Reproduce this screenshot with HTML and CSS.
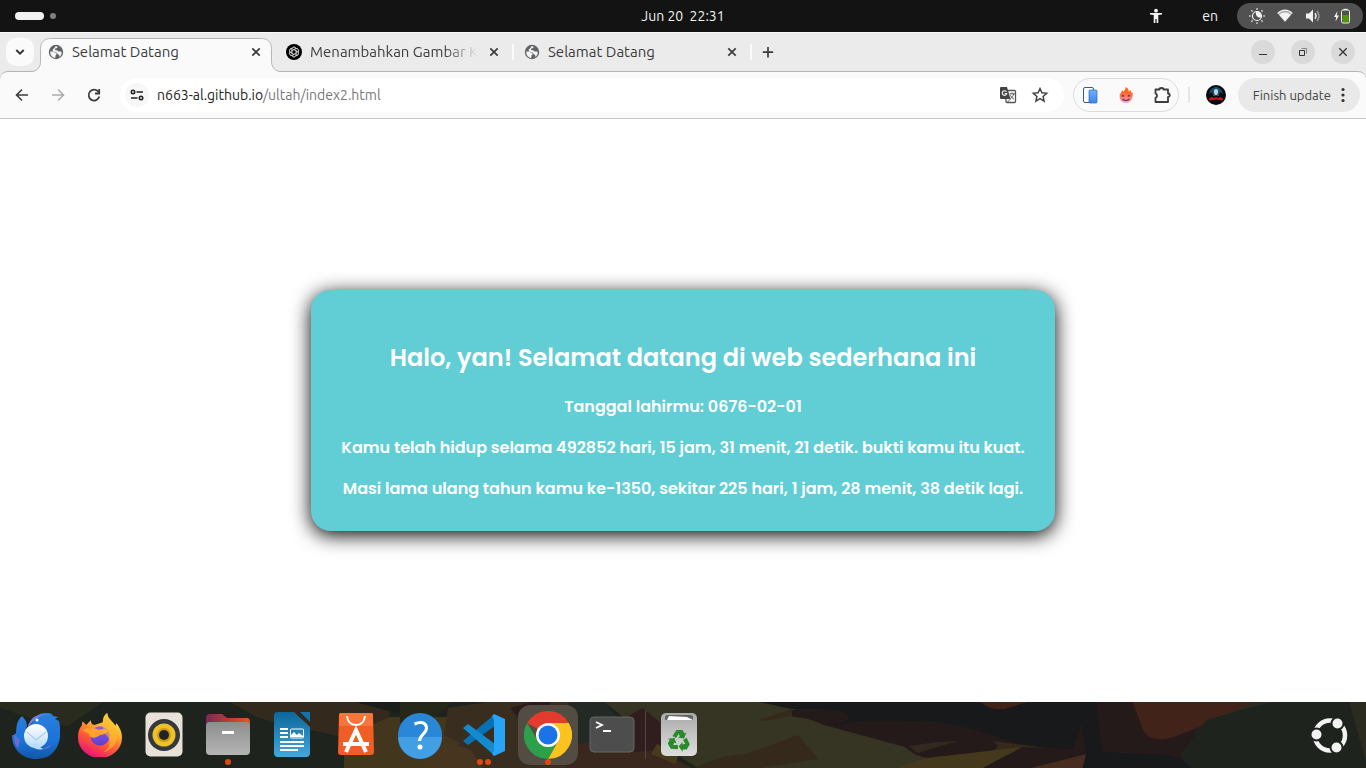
FILE: index.html
```html
<!DOCTYPE html>
<html lang="id">
<head>
<meta charset="utf-8">
<meta name="viewport" content="width=device-width, initial-scale=1">
<title>Selamat Datang</title>
<link rel="stylesheet" href="styles.css">
</head>
<body>
<svg width="0" height="0" class="defs" aria-hidden="true">
  <defs>
    <symbol id="globe" viewBox="0 0 16 16"><circle cx="8" cy="8" r="7.200" fill="#5f6368"/><path d="M2.300 7.400h2.500c1 0 1.300.8 2 1.200.9.400 1.800.2 1.800 1.300 0 .9-1.200 1-1.200 2v2C4.200 13.500 2 10.800 2.300 7.400zM9.500 2.400c.2 1.200-.5 1.700-1.500 1.900-.9.300-1.400.9-.8 1.600.7.600 2-.1 2.600.8.400.9 1.500.9 2.900.9l1 .3c.1 2-.8 4-2.300 5 .1-1.200-.2-2.200-1.200-2.400-1.100-.2-.9-1.300-1.700-1.900-.9-.6-2.500-.4-3.300-1.300C4.300 6.300 4.500 5 6 4.400c1-.4.600-1.600 1.400-2.100z" fill="#f4f4f4"/></symbol>
    <symbol id="close" viewBox="0 0 16 16"><path d="M4.300 4.300l7.400 7.400M11.700 4.300l-7.400 7.400" stroke="#3c3c3c" stroke-width="1.700"/></symbol>
    <linearGradient id="bird" x1="0" y1="0" x2="0" y2="1"><stop offset="0" stop-color="#2a80dc"/><stop offset=".6" stop-color="#1a73d9"/><stop offset="1" stop-color="#1257a8"/></linearGradient>
    <linearGradient id="mail" x1="0" y1="0" x2="0" y2="1"><stop offset="0" stop-color="#fff"/><stop offset="1" stop-color="#b5dcfb"/></linearGradient>
    <linearGradient id="fox" x1=".8" y1="0" x2=".3" y2="1"><stop offset="0" stop-color="#fff44f"/><stop offset=".35" stop-color="#ffb02e"/><stop offset=".65" stop-color="#ff5a36"/><stop offset="1" stop-color="#e8107c"/></linearGradient>
    <linearGradient id="purple" x1="0" y1="0" x2="0" y2="1"><stop offset="0" stop-color="#9059ff"/><stop offset="1" stop-color="#5b3fc4"/></linearGradient>
    <linearGradient id="gray" x1="0" y1="0" x2="0" y2="1"><stop offset="0" stop-color="#8d8d8d"/><stop offset="1" stop-color="#b5b5b5"/></linearGradient>
    <linearGradient id="folder" x1="0" y1="0" x2="1" y2="0"><stop offset="0" stop-color="#7d2853"/><stop offset="1" stop-color="#e95420"/></linearGradient>
    <linearGradient id="writer" x1="0" y1="0" x2="0" y2="1"><stop offset="0" stop-color="#0b679c"/><stop offset="1" stop-color="#45a7dc"/></linearGradient>
    <linearGradient id="bin" x1="0" y1="0" x2="0" y2="1"><stop offset="0" stop-color="#aaa"/><stop offset="1" stop-color="#dedede"/></linearGradient>
    <linearGradient id="flame" x1="0" y1="0" x2="0" y2="1"><stop offset="0" stop-color="#ff6500"/><stop offset=".45" stop-color="#fb6b3c"/><stop offset="1" stop-color="#f5a8df"/></linearGradient>
    <linearGradient id="phone" x1="0" y1="0" x2="0" y2="1"><stop offset="0" stop-color="#6db1ff"/><stop offset="1" stop-color="#3d85ee"/></linearGradient>
  </defs>
</svg>

<header class="topbar">
  <button class="workspaces" aria-label="Workspaces"><span class="pill"></span><span class="dot"></span></button>
  <time class="clock">Jun 20&nbsp; 22:31</time>
  <div class="status">
    <button class="plain" aria-label="Accessibility"><svg width="16" height="16" viewBox="0 0 16 16" fill="#f2f2f2"><circle cx="8" cy="2.700" r="1.900"/><path d="M2 5h12v1.500L10.300 7v8H8.600v-4H7.400v4H5.700V7L2 6.500z"/></svg></button>
    <button class="plain lang">en</button>
    <button class="tray" aria-label="System">
      <svg width="16" height="16" viewBox="0 0 16 16"><circle cx="8" cy="8" r="4.500" fill="none" stroke="#f2f2f2" stroke-width="1.200"/><path d="M7 3.700C6 7.500 9 10.500 12.300 9.200A4.600 4.600 0 0 0 7 3.700z" fill="#f2f2f2"/><path d="M8 0v1.800M8 14.200V16M0 8h1.800M14.200 8H16M2.300 2.300l1.300 1.300M12.400 12.400l1.300 1.300M2.300 13.700l1.300-1.300M12.400 3.600l1.300-1.300" stroke="#c8c8c8" stroke-width="1.500"/></svg>
      <svg width="16" height="16" viewBox="0 0 16 16"><path d="M.7 5.500C5 1 11 1 15.300 5.500L8 14z" fill="#aaa"/><path d="M2.200 6.700C6 3.700 10 3.700 13.800 6.700L8 13.500z" fill="#f2f2f2"/><path d="M.7 5.500C5 1 11 1 15.300 5.500" fill="none" stroke="#f2f2f2" stroke-width="1.300"/></svg>
      <svg width="16" height="16" viewBox="0 0 16 16"><path d="M1 5.500h3L8 1.500v13L4 10.500H1z" fill="#f2f2f2"/><path d="M10 5.300q2 2.700 0 5.400" fill="none" stroke="#eee" stroke-width="1.500"/><path d="M12 3q4 5 0 10" fill="none" stroke="#999" stroke-width="1.500"/></svg>
      <svg width="18" height="16" viewBox="0 0 18 16"><path d="M4.500 3L1 9h2.200L2.500 13.500 6 7.500H3.800z" fill="#f2f2f2"/><rect x="8.500" y="2" width="8" height="13" rx="1.500" fill="none" stroke="#f2f2f2"/><path d="M10.500.8h4V2h-4z" fill="#f2f2f2"/><path d="M9.500 7h6v7h-6z" fill="#4e9a06"/></svg>
    </button>
  </div>
</header>

<div class="browser">
  <nav class="tabstrip" aria-label="Tabs">
    <button class="tabsearch" aria-label="Search tabs"><svg width="16" height="16" viewBox="0 0 16 16"><path d="M4.300 6l3.700 3.700L11.700 6" fill="none" stroke="#333" stroke-width="1.900"/></svg></button>
    <div class="tab active">
      <svg class="tabshape" width="250" height="34" viewBox="0 0 250 34"><path d="M0 33.500c6 0 9.500-4 9.500-10V10.500c0-6 4-10 10-10h211c6 0 10 4 10 10v13c0 6 4 10 9.500 10V34H0z" fill="#fafafa"/><path d="M0 33.500c6 0 9.500-4 9.500-10V10.500c0-6 4-10 10-10h211c6 0 10 4 10 10v13c0 6 4 10 9.500 10" fill="none" stroke="#b4b4b4"/></svg>
      <svg class="fav" width="16" height="16"><use href="#globe"/></svg>
      <a href="#" class="title">Selamat Datang</a>
      <button class="plain" aria-label="Close tab"><svg width="16" height="16"><use href="#close"/></svg></button>
    </div>
    <div class="tab">
      <svg class="fav" width="16" height="16" viewBox="0 0 16 16"><circle cx="8" cy="8" r="8"/><g fill="none" stroke="#ddd" stroke-width=".7"><path id="p" d="M6 8.900V5.300c0-2.500 3.500-3 4.300-.7M6 6.500l3.200-1.800c2.200-1 4.300 1.300 2.800 3.300"/><use href="#p" transform="rotate(60 8 8)"/><use href="#p" transform="rotate(120 8 8)"/><use href="#p" transform="rotate(180 8 8)"/><use href="#p" transform="rotate(240 8 8)"/><use href="#p" transform="rotate(300 8 8)"/></g></svg>
      <a href="#" class="title fade">Menambahkan Gambar K</a>
      <button class="plain" aria-label="Close tab"><svg width="16" height="16"><use href="#close"/></svg></button>
    </div>
    <div class="tab">
      <svg class="fav" width="16" height="16"><use href="#globe"/></svg>
      <a href="#" class="title">Selamat Datang</a>
      <button class="plain" aria-label="Close tab"><svg width="16" height="16"><use href="#close"/></svg></button>
    </div>
    <button class="plain newtab" aria-label="New tab"><svg width="16" height="16" viewBox="0 0 16 16"><path d="M8 3v10.500M2.800 8.200h10.400" stroke="#3c3c3c" stroke-width="1.700"/></svg></button>
    <div class="winbuttons">
      <button aria-label="Minimize"><svg width="16" height="16" viewBox="0 0 16 16"><path d="M4 10.500h8" stroke="#333"/></svg></button>
      <button aria-label="Restore"><svg width="16" height="16" viewBox="0 0 16 16" fill="none"><path d="M6.500 4.500h5v5" stroke="#888"/><path d="M4.500 6.500h5v5h-5z" stroke="#333"/></svg></button>
      <button aria-label="Close"><svg width="16" height="16" viewBox="0 0 16 16"><path d="M4.300 4.300l7.400 7.400M11.700 4.300l-7.400 7.400" stroke="#333" stroke-width="1.300"/></svg></button>
    </div>
  </nav>

  <div class="toolbar">
    <div class="navbuttons">
      <button class="plain" aria-label="Back"><svg width="16" height="16" viewBox="0 0 16 16" fill="none" stroke="#3c3c3c" stroke-width="1.600"><path d="M14 8H3M8 2.500L2.500 8 8 13.500"/></svg></button>
      <button class="plain" aria-label="Forward"><svg width="16" height="16" viewBox="0 0 16 16" fill="none" stroke="#adadad" stroke-width="1.600"><path d="M2 8h11M8 2.500L13.500 8 8 13.500"/></svg></button>
      <button class="plain" aria-label="Reload"><svg width="16" height="16" viewBox="0 0 16 16" fill="none" stroke="#3c3c3c" stroke-width="1.800"><path d="M13.300 9.500A5.400 5.400 0 1 1 12.500 5L13 6"/><path d="M13.200 2v4.500H9"/></svg></button>
    </div>
    <div class="omnibox">
      <button class="siteinfo" aria-label="Site information"><svg width="16" height="16" viewBox="0 0 16 16" fill="none" stroke="#222" stroke-width="1.600"><circle cx="4" cy="5" r="1.700"/><path d="M7.500 5H14M2 11h6.500"/><circle cx="12" cy="11" r="1.700"/></svg></button>
      <a href="#" class="url">n663-al.github.io<span>/ultah/index2.html</span></a>
      <button class="plain" aria-label="Translate"><svg width="18" height="18" viewBox="0 0 18 18"><rect x="7" y="4.500" width="9.500" height="12" rx="1" fill="#fff" stroke="#555" stroke-width="1.300"/><path d="M2 1h6l3.500 12H2a1 1 0 0 1-1-1V2a1 1 0 0 1 1-1z" fill="#444"/><path d="M7.500 5.800A2.300 2.300 0 1 0 7.800 7.500H5.700" fill="none" stroke="#fff" stroke-width="1.100"/><path d="M10.500 7.800h5.500M13 6.500v1.300M14.700 8c-.5 2-1.800 3.500-3.500 4.700M11.300 9.300c.8 1.700 2 2.900 3.700 3.900M8.500 16l3-3" fill="none" stroke="#555"/></svg></button>
      <button class="plain" aria-label="Bookmark"><svg width="18" height="18" viewBox="0 0 18 18"><path d="M9 2.500l1.900 4.300 4.800.5-3.600 3.200 1 4.700L9 12.700l-4.100 2.500 1-4.700-3.600-3.200 4.800-.5z" fill="none" stroke="#444" stroke-width="1.500"/></svg></button>
    </div>
    <div class="extensions">
      <button class="plain" aria-label="Responsive view"><svg width="18" height="18" viewBox="0 0 18 18"><rect x="2.500" y="1.500" width="10" height="15" rx="1.500" fill="#fff" stroke="#46587a"/><rect x="8" y="4" width="8" height="13" rx="1" fill="url(#phone)" stroke="#2f66ab" stroke-width=".7"/></svg></button>
      <button class="plain" aria-label="Flame"><svg width="18" height="18" viewBox="0 0 18 18"><path d="M8.500 1c3 1.300 3 3.200 3.500 5l1.300-2.300c.6 1 1 2.300 1.200 3.300L15.500 6c1 6-1.500 11-6.500 11S1.700 13 3 7l1 1c0-1.500.5-3 1.300-3.700L6.500 6C7 4 9 3.500 8.500 1z" fill="url(#flame)"/><path d="M5 10.300q1-1.300 2 0M11 10.300q1-1.300 2 0M5.500 13q3.500 3 7 0" fill="none" stroke="#70293c" stroke-width="1.200"/></svg></button>
      <button class="plain" aria-label="Extensions"><svg width="18" height="18" viewBox="0 0 18 18"><path d="M2.500 3.500h4a2 1.500 0 0 1 4 0H15v4a1.600 1.600 0 0 1 0 3.500v5H2.500v-4.200a2.200 2.200 0 0 0 0-4.200z" fill="none" stroke="#3c3c3c" stroke-width="1.800" stroke-linejoin="round"/></svg></button>
    </div>
    <span class="divider"></span>
    <button class="plain" aria-label="Profile"><svg width="20" height="20" viewBox="0 0 20 20"><circle cx="10" cy="10" r="10" fill="#06090d"/><path d="M3 9c1-5 4-7 7-7s6 2 7 7l-3-2-1 4H7L6 7z" fill="#194c68"/><path d="M8 5q2-2 4 0v3l-1 2H9L8 8z" fill="#c2ccd4"/><path d="M3 13.500l3-1.500 2 1 2-1 2 1 2-1 3 1.500v2l-7-1-7 1z" fill="#cf151b"/></svg></button>
    <button class="update">Finish update<svg width="16" height="16" viewBox="0 0 16 16" fill="#333"><circle cx="8" cy="2.500" r="1.600"/><circle cx="8" cy="8" r="1.600"/><circle cx="8" cy="13.500" r="1.600"/></svg></button>
  </div>
</div>

<main class="page">
  <section class="card">
    <h2>Halo, yan! Selamat datang di web sederhana ini</h2>
    <p>Tanggal lahirmu: 0676-02-01</p>
    <p>Kamu telah hidup selama 492852 hari, 15 jam, 31 menit, 21 detik. bukti kamu itu kuat.</p>
    <p>Masi lama ulang tahun kamu ke-1350, sekitar 225 hari, 1 jam, 28 menit, 38 detik lagi.</p>
  </section>
</main>

<footer class="dock">
  <svg class="camo" viewBox="0 0 1366 66" preserveAspectRatio="none" aria-hidden="true">
    <path fill="#1f231e" d="M0 0h1366v66H0z"/>
    <path fill="#2a2b1f" d="M0 0h103L68 24 52 23 0 6z"/>
    <path fill="#33291d" d="M230 0h160l-2 40-50-6-80-18z"/>
    <path fill="#42361c" d="M344 34l46-19h70l12 51H344z"/>
    <path fill="#1b1d1a" d="M355 0h50l8 12-20-2z"/>
    <path fill="#252719" d="M400 0h52l-18 16-34 5z"/>
    <path fill="#392d20" d="M448 6l40-6h82v66H440l20-25-16-8z"/>
    <path fill="#47361f" d="M446 40l25 8 12 18h-63z"/>
    <path fill="#2b1b1c" d="M510 6l22-6h18v25l-20 6z"/>
    <path fill="#232925" d="M568 0h36l12 14-2 28-46 2z"/>
    <path fill="#3a281e" d="M566 43l66-7 60 30H566z"/>
    <path fill="#363423" d="M604 0h190v66h-96l-48-30z"/>
    <path fill="#301e1e" d="M622 18l20-12 18 14 1 28-29 2-9-18z"/>
    <path fill="#473b1e" d="M657 42l22 10-4 10-24-10z"/>
    <g transform="translate(-121.600) scale(1.160 1)">
      <path fill="#241a19" d="M787 8h260l91 13-15 45H900L788 15z"/>
      <path fill="#18191b" d="M760 0h335v50q-15 8-65 2L985 43q-55-24-90-24-50-2-68 4h-12q22-2 22-8t-28-8H787z"/>
      <path fill="#363423" d="M750 0l37 7v8q12-1 28 8l70 22q13 14 28 10l-25 11H750z"/>
      <path fill="#35291c" d="M760 18l27-11v7l-24 5zM704 66q24-14 44-14l45-19 17 24-50 9zM960 39l48 7-4 5-60 4q30-8 16-16z"/>
      <path fill="#33291f" d="M888 44l25-4 17-1-34 12z"/>
      <path fill="#45391d" d="M880 66q20-11 39-12l67-9-34 21z"/>
      <path fill="#472d20" d="M993 66l48-14-3 14z"/>
      <path fill="#241a19" d="M1030 47l7-27 4 30v2l-48 14h-38l31-21zM1050 0h75v60l-36-8-34-2z"/>
      <path fill="#18191b" d="M1042 52h65q17 4 25 14h-94z"/>
      <path fill="#422319" d="M1081 0h119l-40 15-43 20q-23 7-27-8zM950 0h41l-20 7q-12 2-21-7z"/>
      <path fill="#1f231e" d="M1145 18q36-11 44-18h91l3 66h-151l-10-12z"/>
      <path fill="#2b2b1f" d="M1155 14l46-14h-13zM1268 0h98v66h-82z"/>
    </g>
  </svg>
  <nav class="apps" aria-label="Dock">
    <button aria-label="Thunderbird"><svg width="48" height="48" viewBox="0 0 48 48"><path d="M10 5q7 7 4 13l7-7Q24 1 36 2q4 0 5 3l5 1-3 2 4 2q3 14-1 24c-5 11-13 14-22 14C10 48 0 38 0 24q2 1 4-2Q4 10 10 5z" fill="url(#bird)"/><path d="M16 14Q22 0 41 4q-13-4-25 12z" fill="#777fe4"/><circle cx="25" cy="9" r="1.500" fill="#fff"/><path d="M18 34q12 8 21-1-3 10-21 1M2 23q0 11 4 14l2-8z" fill="#696bd4"/><circle cx="24" cy="25" r="12" fill="url(#mail)"/><path d="M15 21l9 8 10-8" fill="none" stroke="#9cbce0"/><path d="M18 34q7 6 13 4-6-4-7-6z" fill="#b5dcfb"/></svg></button>
    <button aria-label="Firefox"><svg width="44" height="44" viewBox="0 0 48 48"><path d="M27 10Q27 3 32 0c0 7 5 8 9 14l1-3c4 6 6 10 6 16a24 22 0 0 1-48 0q0-9 4-13l1-5 4 4 5-5q0 5 4 5z" fill="url(#fox)"/><circle cx="24" cy="25" r="10.500" fill="url(#purple)"/><path d="M5 19q8-5 17-1 7-1 11 1-3 4-9 5-2 2-6 3-6 0-6-5z" fill="#ffa12b"/><path d="M32 0c0 7 13 12 11 26-1 9-8 15-15 17 12-9 5-19-1-22 1-8-1-15 5-21z" fill="#ffbb2e" opacity=".6"/></svg></button>
    <button aria-label="Rhythmbox"><svg width="48" height="48" viewBox="0 0 48 48"><rect x="5.500" y="1.500" width="37" height="44" rx="5" fill="#e7e1d7"/><circle cx="24" cy="24" r="16" fill="#34373d"/><circle cx="24" cy="24" r="11.500" fill="#ecc129"/><circle cx="24" cy="24" r="7" fill="#ce9a12"/><circle cx="24" cy="24" r="5" fill="#202327"/></svg></button>
    <button class="running" aria-label="Files"><svg width="48" height="48" viewBox="0 0 48 48"><path d="M2 7q0-4 4-4h12l5 4h20q3 0 3 4v10H2z" fill="url(#folder)"/><rect x="2" y="11" width="44" height="33" rx="4" fill="url(#gray)"/><path d="M18 21.500h12" stroke="#fff" stroke-width="3"/></svg></button>
    <button aria-label="LibreOffice Writer"><svg width="48" height="48" viewBox="0 0 48 48"><path d="M10 1h16l16 15v26q0 4-4 4H10q-4 0-4-4V5q0-4 4-4z" fill="url(#writer)"/><path d="M32 1h10v10z" fill="#1374ad"/><g stroke="#fff" stroke-width="2"><path d="M12 18h8M12 22h8M12 26h8M12 31h24M12 35h24M12 39h18"/></g><rect x="22.500" y="18" width="13" height="9" rx="1" fill="none" stroke="#fff"/><path d="M23 26v-2l3-3 3 3 2-2 4 3v1z" fill="#fff"/></svg></button>
    <button aria-label="App Center"><svg width="48" height="48" viewBox="0 0 48 48"><path d="M9 2h30q2 0 2 2l1 37q0 3-3 3H9q-3 0-3-3L7 4q0-2 2-2z" fill="#f15e25"/><path d="M7 4q0-2 2-2h30q2 0 2 2v11H7z" fill="#fa7439"/><path d="M15 5q1 9 9 9t9-9" fill="none" stroke="#fff" stroke-width="2"/><path d="M14 41l10-22 10 22M11 33h26" fill="none" stroke="#fff" stroke-width="4"/></svg></button>
    <button aria-label="Help"><svg width="48" height="48" viewBox="0 0 48 48"><circle cx="24" cy="24" r="22" fill="#2a87d8"/><path d="M2 26a22 22 0 0 0 44 0z" fill="#429fe3"/><path d="M18.500 13q10-4 12 3c1 7-7 7-7 14" fill="none" stroke="#fff" stroke-width="3"/><circle cx="24" cy="36" r="2.500" fill="#fff"/></svg></button>
    <button class="running two" aria-label="Visual Studio Code"><svg width="48" height="48" viewBox="0 0 48 48"><path d="M3 30l5 4 27-19V3z" fill="#0871b5"/><path d="M3 17l5-4 27 20v12z" fill="#148bd0"/><path d="M34 3l11 5v32l-11 5-2-2 2-3V9l-2-4z" fill="#28a4f4"/></svg></button>
    <button class="running focused" aria-label="Google Chrome"><svg width="48" height="48" viewBox="0 0 48 48"><path d="M24 24L3.200 12A24 24 0 0 1 44.800 12z" fill="#e33b2e"/><path d="M24 12h20.800A24 24 0 0 1 24 48l10-18z" fill="#fcc31e"/><path d="M3.200 12A24 24 0 0 0 24 48l10-18H14z" fill="#2da04c"/><circle cx="24" cy="24" r="12" fill="#fff"/><circle cx="24" cy="24" r="9.500" fill="#1a73e8"/></svg></button>
    <button aria-label="Terminal"><svg width="48" height="48" viewBox="0 0 48 48"><rect x="2" y="6" width="44" height="35" rx="4" fill="#4d4d4d" stroke="#666"/><path d="M8 11l6 3-6 3M15 20h8" fill="none" stroke="#fff" stroke-width="1.800"/></svg></button>
    <span class="sep"></span>
    <button aria-label="Trash"><svg width="48" height="48" viewBox="0 0 48 48"><rect x="6" y="2" width="36" height="43" rx="5" fill="url(#bin)"/><path d="M10 9V6q0-2 3-2h22q3 0 3 2v3z" fill="#666"/><path d="M12 9l2-4 18 1 6 3z" fill="#fff"/><g fill="#278b2c"><path id="arrow" d="M17.500 25l4-6h6l2 3.500 2-1-2.500 6-6-1 2-1.200-1.500-2.300-2.500 4z"/><use href="#arrow" transform="rotate(120 24 30)"/><use href="#arrow" transform="rotate(240 24 30)"/></g></svg></button>
  </nav>
  <button class="launcher" aria-label="Show apps"><svg width="38" height="38" viewBox="0 0 38 38"><circle cx="19" cy="19.500" r="15" fill="none" stroke="#f2f2f2" stroke-width="4.500"/><g fill="#f2f2f2" stroke="#1f231e" stroke-width="2"><circle cx="5.500" cy="18.500" r="6"/><circle cx="26.500" cy="7.500" r="6"/><circle cx="25.500" cy="31.500" r="6"/></g></svg></button>
</footer>
</body>
</html>
```
FILE: styles.css
```css
* { box-sizing: border-box; }

body {
  margin: 0;
  min-height: 100vh;
  display: flex;
  flex-direction: column;
  background: #fff;
  font-family: Ubuntu, "Noto Sans", "Open Sans", sans-serif;
  font-size: 15px;
  color: #3c3c3c;
}

svg { display: block; flex: none; }
.defs { position: absolute; }
a { color: inherit; text-decoration: none; }

button {
  border: 0;
  padding: 0;
  margin: 0;
  font: inherit;
  color: inherit;
  background: none;
}

.topbar {
  height: 32px;
  padding: 0 3px;
  display: grid;
  grid-template-columns: 1fr auto 1fr;
  align-items: center;
  background: #131313;
  color: #f2f2f2;
  font-size: 14px;
}
.workspaces { display: flex; align-items: center; gap: 6px; justify-self: start; margin-left: 12px; }
.pill { width: 29px; height: 8px; border-radius: 4px; background: #f2f2f2; }
.dot { width: 6px; height: 6px; border-radius: 50%; background: #808080; }
.clock { line-height: 30px; }
.status { display: flex; align-items: center; justify-self: end; }
.lang { margin: 0 19px 0 38px; }
.tray {
  display: flex;
  align-items: center;
  gap: 12px;
  height: 26px;
  padding: 0 12px;
  border-radius: 13px;
  background: #515151;
}

.browser { background: #ebebeb; border-top: 1px solid #fafafa; }
.tabstrip { display: flex; height: 38px; padding: 5px 11px 0 6px; }
.tabsearch {
  width: 28px;
  height: 28px;
  padding: 6px;
  border-radius: 10px;
  background: #fafafa;
}
.tab {
  position: relative;
  flex: 0 1 238px;
  min-width: 0;
  height: 28px;
  padding: 0 8px 0 14px;
  display: flex;
  align-items: center;
}
.tab.active { z-index: 1; }
.tab:not(.active)::after {
  content: "";
  position: absolute;
  right: -4px;
  top: 6px;
  width: 2px;
  height: 16px;
  background: #fafafa;
}
.tabshape { position: absolute; left: -3px; top: 0; }
.fav { position: relative; margin-right: 8px; }
.title {
  position: relative;
  flex: 1;
  min-width: 0;
  white-space: nowrap;
  line-height: 20px;
}
.fade { mask-image: linear-gradient(to right, #000 80%, transparent); }
.tab .plain { position: relative; margin-left: 8px; }
.newtab { margin-left: 12px; height: 28px; }
.winbuttons { display: flex; gap: 16px; margin-left: auto; height: 28px; align-items: center; }
.winbuttons button { padding: 4px; border-radius: 50%; background: #dadada; }

.toolbar {
  display: flex;
  align-items: center;
  height: 48px;
  padding: 0 6px 0 14px;
  border: solid #b4b4b4;
  border-width: 1px 0;
  border-bottom-color: #c8c8c8;
  border-radius: 8px 8px 0 0;
  background: #fafafa;
}
.navbuttons { display: flex; gap: 20px; }
.omnibox {
  flex: 1;
  display: flex;
  align-items: center;
  gap: 14px;
  height: 34px;
  margin-left: 18px;
  padding: 0 15px 0 5px;
  border-radius: 17px;
  background: #fff;
}
.siteinfo { padding: 4px; border-radius: 50%; background: #f7f7f7; }
.url { flex: 1; margin-left: -6px; font-size: 14px; color: #222; white-space: nowrap; }
.url span { color: #777; }
.extensions {
  display: flex;
  align-items: center;
  gap: 18px;
  height: 34px;
  margin-left: 9px;
  padding: 0 7px;
  border: 1px solid #dcdcdc;
  border-radius: 17px;
}
.divider { width: 2px; height: 16px; margin: 0 16px 0 9px; background: #e6e6e6; }
.update {
  display: flex;
  align-items: center;
  gap: 4px;
  height: 34px;
  margin-left: 12px;
  padding: 0 9px 0 15px;
  border-radius: 17px;
  background: #e9e9e9;
  font-size: 13px;
  color: #444;
}

.page {
  flex: 1;
  display: flex;
  align-items: center;
  justify-content: center;
  padding: 16px;
}
.card {
  width: 744px;
  max-width: 100%;
  padding: 30px 16px;
  border-radius: 20px;
  background: #61ced6;
  box-shadow: 0 4px 20px #000;
  color: #fff;
  text-align: center;
  font-family: Poppins, Inter, sans-serif;
  font-weight: 600;
}
.card h2 { margin: 20px 0 19px; font-size: 24px; line-height: 35px; font-weight: 600; }
.card p { margin: 16px 0 0; font-size: 16px; line-height: 25px; }

.dock {
  position: relative;
  display: flex;
  align-items: center;
  justify-content: space-between;
  height: 66px;
  padding: 0 17px 0 4px;
  background: #1f231e;
}
.camo { position: absolute; inset: 0; width: 100%; height: 100%; }
.apps { position: relative; display: flex; align-items: center; }
.apps button {
  position: relative;
  width: 60px;
  height: 60px;
  margin: 0 2px;
  display: flex;
  align-items: center;
  justify-content: center;
  border-radius: 12px;
}
.apps .focused { background: #534c43; }
.running::after {
  content: "";
  position: absolute;
  bottom: 0;
  left: 27px;
  width: 6px;
  height: 6px;
  border-radius: 50%;
  background: #dd4814;
}
.two::after { left: 23px; box-shadow: 8px 0 #dd4814; }
.sep { width: 1px; height: 48px; margin: 0 1px; background: #54483f; }
.launcher { position: relative; }
```
